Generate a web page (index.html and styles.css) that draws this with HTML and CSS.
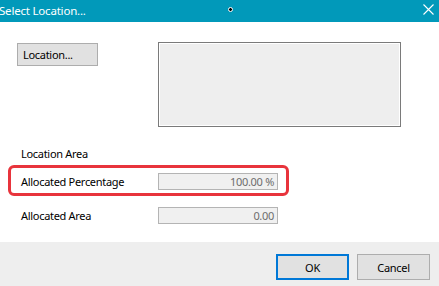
FILE: index.html
```html
<!DOCTYPE html>
<html>
<head>
<meta charset="utf-8">
<link rel="stylesheet" href="styles.css">
</head>
<body>
<div class="window">
  <div class="titlebar">
    <span class="title">Select Location...</span>
    <span class="cursor-dot"></span>
    <svg class="close" width="11" height="11" viewBox="0 0 11 11"><path d="M0.5 0.5 L10.5 10.5 M10.5 0.5 L0.5 10.5" stroke="#fff" stroke-width="1.1" fill="none"/></svg>
  </div>
  <div class="content">
    <div class="top-row">
      <div class="btn loc-btn">Location...</div>
      <div class="loc-box"></div>
    </div>
    <div class="row plain area-label"><span class="label">Location Area</span></div>
    <div class="highlight">
      <span class="label">Allocated Percentage</span>
      <div class="field">100.00 %</div>
    </div>
    <div class="row plain area-row">
      <span class="label">Allocated Area</span>
      <div class="field">0.00</div>
    </div>
  </div>
  <div class="footer">
    <div class="btn ok">OK</div>
    <div class="btn cancel">Cancel</div>
  </div>
</div>
</body>
</html>
```
FILE: styles.css
```css
html, body {
  margin: 0;
  padding: 0;
}
body {
  width: 439px;
  height: 286px;
  overflow: hidden;
  background: #fff;
  font-family: "Noto Sans", "Open Sans", "Liberation Sans", sans-serif;
  font-size: 11px;
  letter-spacing: -0.3px;
  color: #000;
}
.window {
  display: flex;
  flex-direction: column;
  height: 286px;
}
.titlebar {
  height: 22px;
  background: #0199ba;
  display: flex;
  align-items: center;
  position: relative;
  color: #fff;
}
.title {
  font-size: 11.5px;
  letter-spacing: -0.2px;
  margin-left: -1px;
  line-height: 22px;
}
.cursor-dot {
  position: absolute;
  left: 228px;
  top: 7px;
  width: 3px;
  height: 3px;
  background: #000;
  border: 1px solid #fff;
  border-radius: 50%;
}
.close {
  position: absolute;
  left: 423px;
  top: 4px;
}
.content {
  display: flex;
  flex-direction: column;
}
.top-row {
  display: flex;
  align-items: flex-start;
  margin-top: 20px;
  margin-left: 17px;
}
.btn {
  box-sizing: border-box;
  background: #e1e1e1;
  border: 1px solid #adadad;
  display: flex;
  align-items: center;
  justify-content: center;
}
.loc-btn {
  width: 81px;
  height: 23px;
  margin-top: 1px;
  justify-content: flex-start;
  padding-left: 5px;
  padding-bottom: 1px;
}
.loc-box {
  box-sizing: border-box;
  margin-left: 60px;
  width: 243px;
  height: 85px;
  background: #eeeeee;
  border: 1px solid #7a7a7a;
  box-shadow: inset 1px 1px 0 #fff, inset -1px -1px 0 #fff;
}
.row {
  display: flex;
  align-items: center;
  padding-left: 21px;
}
.label {
  width: 137px;
  flex: none;
}
.area-label {
  margin-top: 18px;
  height: 17px;
}
.highlight {
  box-sizing: border-box;
  margin-top: 3px;
  margin-left: 8px;
  width: 281px;
  height: 31px;
  border: 3px solid #e8343c;
  border-radius: 6px;
  display: flex;
  align-items: center;
  padding-left: 10px;
  padding-top: 2px;
}
.field {
  box-sizing: border-box;
  width: 120px;
  height: 17px;
  background: #f0f0f0;
  border: 1px solid #b4b4b4;
  color: #6d6d6d;
  text-align: right;
  padding-right: 3px;
  line-height: 15px;
}
.area-row {
  margin-top: 11px;
}
.footer {
  margin-top: auto;
  height: 44px;
  background: #eeeeee;
  display: flex;
  justify-content: flex-end;
  align-items: flex-start;
  padding-top: 12px;
  padding-right: 9px;
  gap: 8px;
  box-sizing: border-box;
}
.ok, .cancel {
  width: 73px;
  height: 26px;
}
.ok {
  border: 2px solid #0078d7;
}
```
